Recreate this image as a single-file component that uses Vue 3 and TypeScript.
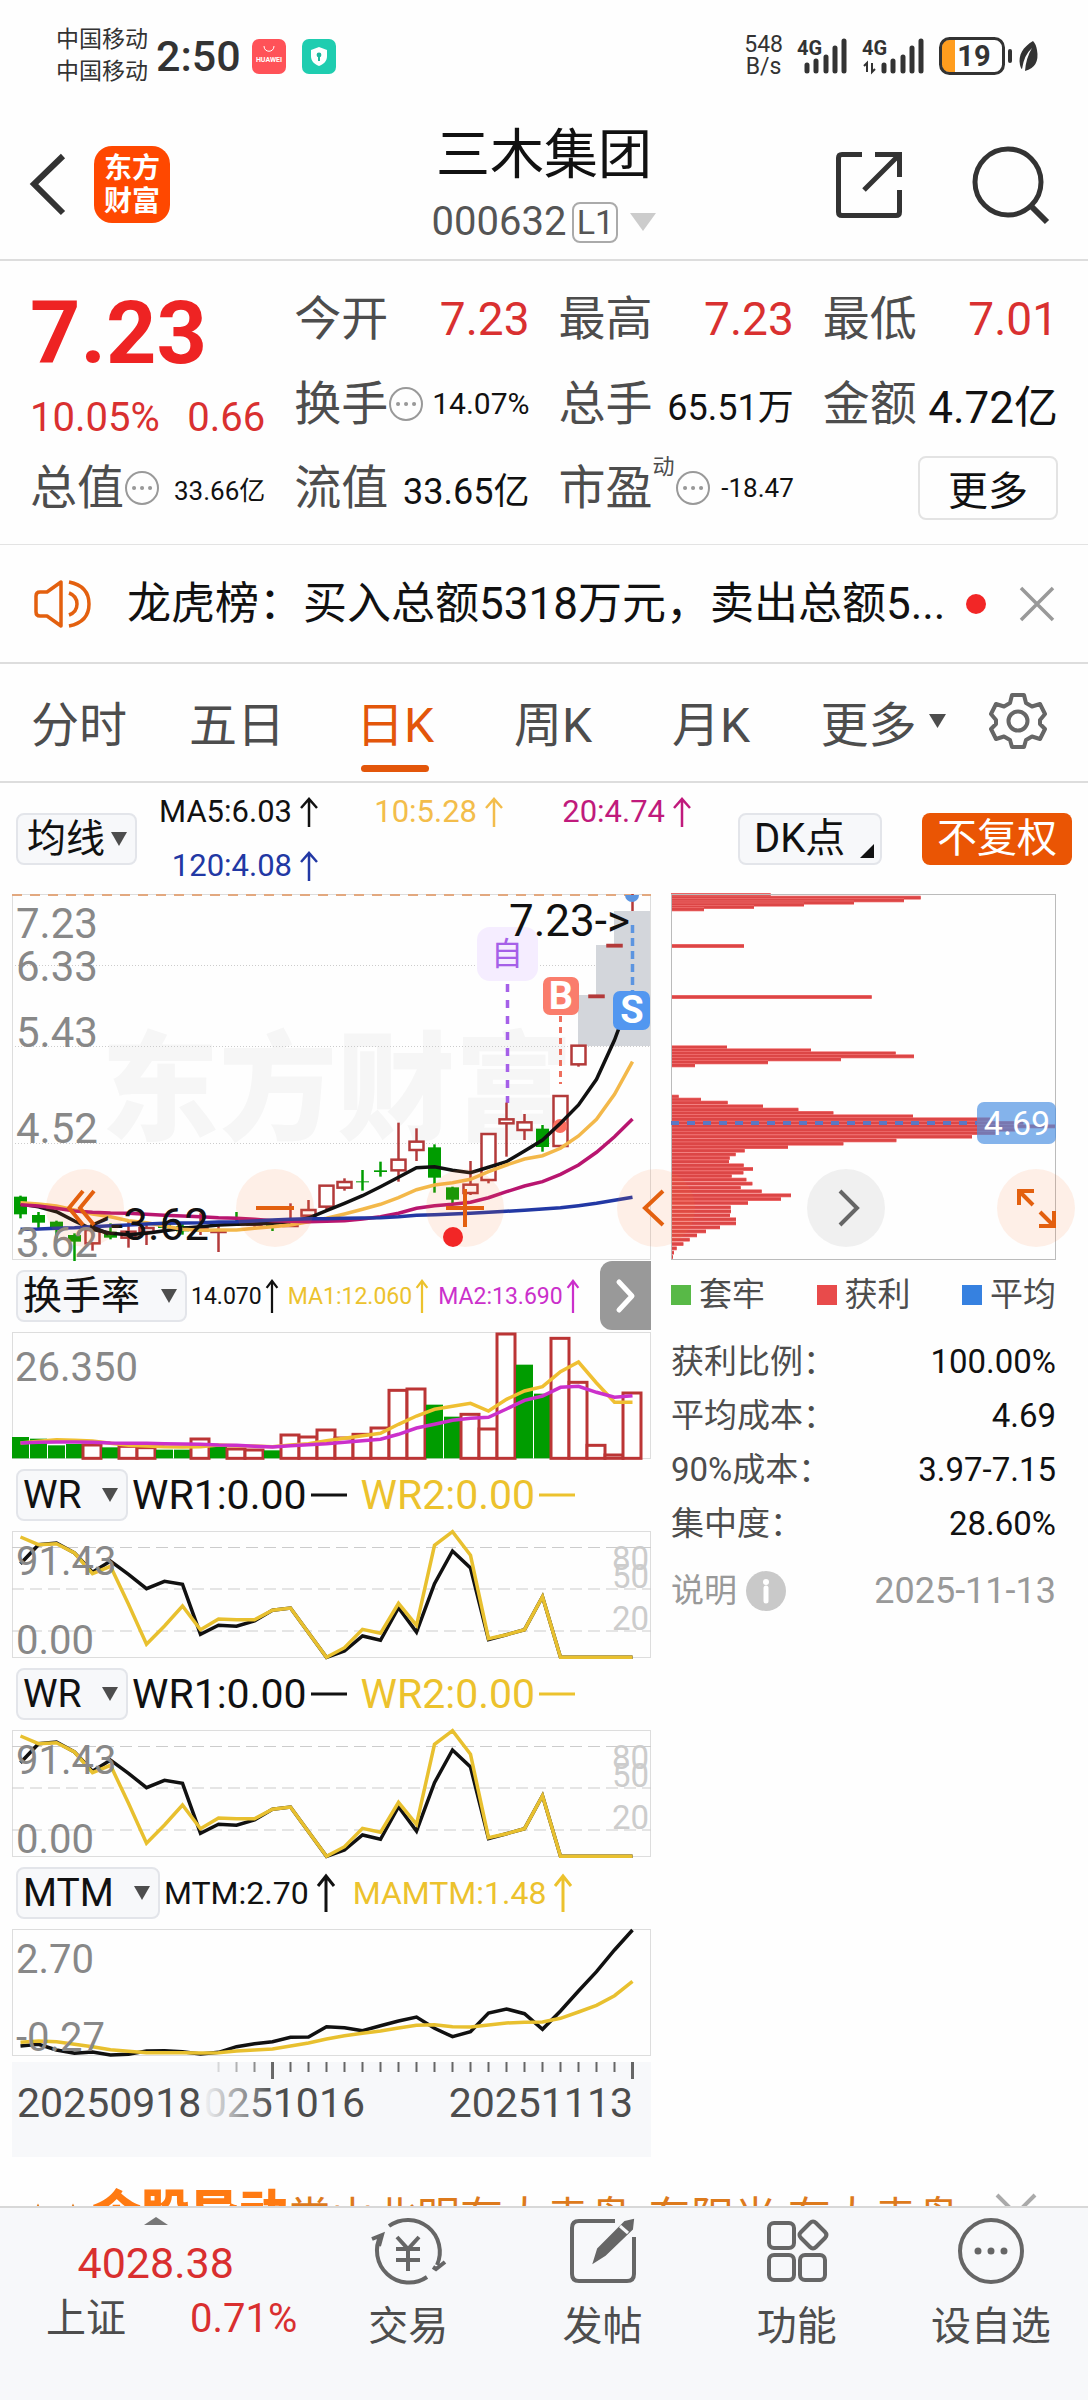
<script setup lang="ts">
import { ref } from 'vue'

type Trend = 'up' | 'flat'
interface Reading { text: string; color: string; trend: Trend }
/* top, bottom, high, low of a candle; samples are stored at 3x vertical resolution */
type Candle = [number, number, number, number, 'r' | 'g']

const SLOT = 18
const xAt = (i: number): number => 8.5 + i * SLOT
const line = (values: number[], origin: number, start = 0): string =>
  values.map((v, i) => `${xAt(i + start)},${((v - origin) / 3).toFixed(1)}`).join(' ')

const period = ref('日K')
const periods = ['分时', '五日', '日K', '周K', '月K']

const maReadings: Reading[] = [
  { text: 'MA5:6.03', color: '#111', trend: 'up' },
  { text: '10:5.28', color: '#f3bd4b', trend: 'up' },
  { text: '20:4.74', color: '#c01a7c', trend: 'up' },
  { text: '120:4.08', color: '#2238a4', trend: 'up' },
]
const turnoverReadings: Reading[] = [
  { text: '14.070', color: '#111', trend: 'up' },
  { text: 'MA1:12.060', color: '#ecc22d', trend: 'up' },
  { text: 'MA2:13.690', color: '#cb30cb', trend: 'up' },
]
const wrReadings: Reading[] = [
  { text: 'WR1:0.00', color: '#111', trend: 'flat' },
  { text: 'WR2:0.00', color: '#ecc22d', trend: 'flat' },
]
const mtmReadings: Reading[] = [
  { text: 'MTM:2.70', color: '#111', trend: 'up' },
  { text: 'MAMTM:1.48', color: '#ecc22d', trend: 'up' },
]

const candles: Candle[] = [
  [410, 463, 407, 475, 'g'], [465, 488, 456, 505, 'g'], [485, 510, 482, 535, 'g'], [525, 545, 520, 603, 'g'],
  [510, 550, 492, 572, 'r'], [515, 533, 490, 538, 'g'], [515, 533, 485, 563, 'r'], [504, 516, 488, 555, 'r'],
  [490, 504, 475, 512, 'g'], [498, 514, 490, 524, 'g'], [505, 512, 460, 525, 'r'], [514, 516, 498, 576, 'r'],
  [484, 488, 456, 498, 'g'], [490, 494, 484, 500, 'r'], [494, 498, 480, 513, 'g'], [494, 498, 430, 499, 'r'],
  [450, 467, 420, 475, 'r'], [377, 440, 377, 448, 'r'], [366, 383, 355, 392, 'r'], [364, 367, 330, 392, 'g'],
  [331, 336, 305, 350, 'g'], [299, 331, 188, 365, 'r'], [245, 270, 205, 303, 'r'], [262, 353, 253, 398, 'g'],
  [382, 419, 380, 430, 'g'], [374, 399, 303, 405, 'r'], [222, 360, 222, 370, 'r'], [178, 190, 128, 290, 'r'],
  [187, 210, 162, 240, 'r'], [206, 261, 195, 275, 'g'], [108, 258, 106, 260, 'r'], [-43, 13, -43, 20, 'r'],
  [-193, -189, -193, -189, 'r'], [-345, -341, -345, -341, 'r'],
]
const ma5 = [432, 440, 455, 483, 508, 520, 524, 520, 512, 505, 500, 495, 493, 492, 490, 485, 474, 452, 430, 407, 380, 352, 323, 320, 331, 338, 322, 305, 273, 240, 190, 135, 58, -60, -205]
const ma10 = [428, 432, 438, 450, 462, 470, 482, 488, 498, 508, 511, 510, 510, 505, 500, 495, 485, 475, 462, 448, 433, 413, 389, 375, 368, 358, 335, 315, 297, 287, 265, 228, 178, 103, 5]
const ma20 = [434, 438, 445, 453, 457, 459, 460, 463, 466, 468, 470, 473, 475, 478, 482, 484, 485, 484, 482, 477, 470, 460, 445, 437, 433, 427, 413, 395, 378, 365, 343, 315, 277, 230, 177]
const ma120 = [508, 507, 505, 503, 500, 497, 495, 492, 490, 489, 488, 486, 485, 483, 480, 478, 476, 476, 475, 474, 473, 470, 466, 464, 462, 460, 457, 454, 451, 447, 443, 437, 430, 421, 412]
const maLines = [
  { values: ma5, color: '#111' }, { values: ma10, color: '#f3b84a' },
  { values: ma20, color: '#b8156f' }, { values: ma120, color: '#2238a4' },
]

const volume: [number, 'r' | 'g'][] = [
  [349, 'g'], [354, 'g'], [374, 'g'], [370, 'g'], [373, 'r'], [380, 'g'], [377, 'r'], [381, 'r'], [387, 'g'], [387, 'g'],
  [355, 'r'], [377, 'g'], [385, 'r'], [388, 'r'], [389, 'g'], [343, 'r'], [349, 'r'], [328, 'r'], [352, 'r'], [341, 'r'],
  [322, 'r'], [209, 'r'], [205, 'r'], [252, 'g'], [288, 'g'], [281, 'r'], [325, 'r'], [40, 'r'], [132, 'g'], [219, 'g'],
  [53, 'r'], [185, 'r'], [374, 'r'], [403, 'r'], [217, 'r'],
]
const volMa1 = [368, 363, 358, 360, 362, 369, 375, 377, 379, 380, 379, 374, 376, 377, 379, 374, 370, 361, 354, 346, 339, 312, 287, 267, 258, 249, 272, 237, 212, 199, 154, 125, 188, 246, 246]
const volMa2 = [368, 366, 365, 365, 366, 368, 369, 369, 370, 371, 372, 374, 375, 378, 380, 376, 373, 370, 366, 361, 357, 342, 323, 312, 300, 294, 291, 266, 240, 227, 201, 198, 216, 231, 226]

const wr1 = [730, 673, 668, 698, 756, 722, 762, 805, 783, 792, 942, 915, 918, 902, 870, 863, 937, 1011, 992, 947, 960, 862, 935, 790, 692, 743, 958, 943, 928, 829, 1011, 1011, 1011, 1011, 1011]
const wr2 = [650, 673, 670, 698, 760, 738, 852, 972, 917, 857, 928, 896, 898, 898, 870, 863, 937, 1011, 982, 927, 939, 849, 915, 675, 634, 705, 955, 943, 928, 829, 1011, 1011, 1011, 1011, 1011]
const mtm = [558, 553, 570, 580, 576, 585, 583, 573, 572, 575, 582, 577, 560, 551, 545, 532, 531, 500, 503, 512, 497, 483, 471, 505, 530, 515, 459, 447, 461, 508, 453, 393, 335, 270, 210]
const mamtm = [547, 543, 545, 553, 560, 569, 574, 578, 578, 578, 579, 578, 573, 570, 567, 558, 549, 537, 527, 520, 513, 504, 496, 494, 500, 501, 495, 489, 487, 486, 475, 456, 436, 407, 364]

/* cost distribution: [row, extent] pairs at 3x resolution */
const chips: [number, number][] = [
  [48, 392], [56, 842], [64, 792], [71, 642], [77, 492], [84, 342], [91, 192], [201, 312], [354, 695],
  [505, 261], [514, 513], [523, 767], [532, 822], [541, 603], [550, 384], [559, 165],
  [653, 116], [662, 183], [671, 263], [682, 369], [692, 475], [702, 580], [712, 819], [721, 1050], [732, 1150],
  [742, 1247], [752, 1130], [762, 1070], [773, 996], [784, 769], [794, 610], [804, 444], [815, 314], [826, 287],
  [837, 269], [848, 267], [859, 311], [870, 339], [881, 310], [891, 275], [902, 319], [914, 337], [926, 302],
  [937, 365], [949, 453], [960, 423], [972, 324], [985, 272], [997, 273], [1009, 270], [1021, 288], [1033, 288],
  [1045, 240], [1057, 198], [1069, 171], [1082, 149], [1095, 130], [1108, 110], [1121, 102], [1134, 99],
]
const ticks = Array.from({ length: 24 }, (_, k) => k + 11)

const legend = [
  { name: '套牢', color: '#58b947' }, { name: '获利', color: '#e84b4b' }, { name: '平均', color: '#3681e0' },
]
const costs = [
  ['获利比例：', '100.00%'], ['平均成本：', '4.69'], ['90%成本：', '3.97-7.15'], ['集中度：', '28.60%'],
]
</script>

<template>
  <div class="app">
    <div class="status">
      <div class="carriers"><span>中国移动</span><span>中国移动</span></div>
      <span class="clock">2:50</span>
      <svg class="badge-app" viewBox="0 0 34 35"><rect width="34" height="35" rx="7" fill="#ff5258" /><path d="M12 7c0 7 10 7 10 0" fill="none" stroke="#fff" stroke-width="1" /><text x="17" y="23" font-size="7" fill="#fff" text-anchor="middle" font-weight="700">HUAWEI</text></svg>
      <svg class="badge-app" viewBox="0 0 34 35"><rect width="34" height="35" rx="7" fill="#1fcdb0" /><path d="M17 8l8 3v6c0 5-3 8-8 10-5-2-8-5-8-10v-6z" fill="#fff" /><circle cx="17" cy="16" r="2.4" fill="#1fb89e" /><path d="M17 16v6" stroke="#1fb89e" stroke-width="2" /></svg>
      <div class="net"><span>548</span><span>B/s</span></div>
      <svg class="signal" viewBox="0 0 51 36"><text x="0" y="17" font-size="20" font-weight="700" fill="#333">4G</text><path d="M10 27v6M19 23v10M29 19v14M38 10v23M47 3v30" stroke="#333" stroke-width="5" stroke-linecap="round" /></svg>
      <svg class="signal wide" viewBox="0 0 63 36"><text x="0" y="17" font-size="20" font-weight="700" fill="#333">4G</text><path d="M5 34V25l-3 3M10 25v9l3-3" fill="none" stroke="#333" stroke-width="2" /><path d="M22 27v6M31 23v10M41 19v14M50 10v23M59 3v30" stroke="#333" stroke-width="5" stroke-linecap="round" /></svg>
      <svg class="battery" viewBox="0 0 74 38"><path d="M10 3h6v32h-6q-7 0-7-7V10q0-7 7-7z" fill="#ff9d1e" /><rect x="1.5" y="1.5" width="63" height="35" rx="9" fill="none" stroke="#333" stroke-width="3" /><path d="M71 14v10" stroke="#333" stroke-width="4" stroke-linecap="round" /><text x="35" y="29" font-size="29" font-weight="700" text-anchor="middle" fill="#333">19</text></svg>
      <svg class="leaf" viewBox="0 0 22 32"><path d="M15 1C5 7 0 15 2 25q1 4 2 4Q6 15 14 8 8 18 7 31 22 27 19 10 18 4 15 1z" fill="#333" /></svg>
    </div>

    <header class="head">
      <div class="head-left">
        <button class="bare" aria-label="返回"><svg width="36" height="64" viewBox="0 0 36 64"><path d="M33 3L4 31 33 60" fill="none" stroke="#333" stroke-width="6" /></svg></button>
        <div class="logo"><span>东方</span><span>财富</span></div>
      </div>
      <div class="title">
        <h1>三木集团</h1>
        <div class="code"><span>000632</span><i>L1</i><svg width="26" height="18" viewBox="0 0 26 18"><path d="M0 0h26L13 18z" fill="#ccc" /></svg></div>
      </div>
      <div class="head-right">
        <button class="bare" aria-label="分享"><svg width="66" height="66" viewBox="0 0 66 66"><path d="M26 2.5H6Q2.5 2.5 2.5 6v54q0 3.5 3.5 3.5h54q3.5 0 3.5-3.5V38M39 2.5h24.5V25M63 3L28 38" fill="none" stroke="#333" stroke-width="5" /></svg></button>
        <button class="bare" aria-label="搜索"><svg width="78" height="78" viewBox="0 0 78 78"><circle cx="36" cy="36" r="33" fill="none" stroke="#333" stroke-width="5" /><path d="M59 60l16 16" stroke="#333" stroke-width="6" /></svg></button>
      </div>
    </header>

    <main>
      <section class="quote">
        <div class="price">
          <strong>7.23</strong>
          <p><span>10.05%</span><span>0.66</span></p>
        </div>
        <div class="cell"><span>今开</span><b class="up">7.23</b></div>
        <div class="cell"><span>最高</span><b class="up">7.23</b></div>
        <div class="cell"><span>最低</span><b class="up">7.01</b></div>
        <div class="cell"><span>换手<svg class="more-dot" viewBox="0 0 36 36"><circle cx="18" cy="18" r="16" fill="none" stroke="#999" stroke-width="2" /><path d="M10 18h.1M18 18h.1M26 18h.1" stroke="#999" stroke-width="4" stroke-linecap="round" /></svg></span><b class="s">14.07%</b></div>
        <div class="cell"><span>总手</span><b class="m">65.51万</b></div>
        <div class="cell"><span>金额</span><b class="l">4.72亿</b></div>
        <div class="cell"><span>总值<svg class="more-dot" viewBox="0 0 36 36"><circle cx="18" cy="18" r="16" fill="none" stroke="#999" stroke-width="2" /><path d="M10 18h.1M18 18h.1M26 18h.1" stroke="#999" stroke-width="4" stroke-linecap="round" /></svg></span><b class="xs">33.66亿</b></div>
        <div class="cell"><span>流值</span><b class="m">33.65亿</b></div>
        <div class="cell"><span>市盈<sup>动</sup><svg class="more-dot" viewBox="0 0 36 36"><circle cx="18" cy="18" r="16" fill="none" stroke="#999" stroke-width="2" /><path d="M10 18h.1M18 18h.1M26 18h.1" stroke="#999" stroke-width="4" stroke-linecap="round" /></svg></span><b class="xs">-18.47</b></div>
        <div class="cell end"><button class="more">更多</button></div>
      </section>

      <section class="notice">
        <svg width="58" height="50" viewBox="0 0 58 50"><path d="M27 3v44L13 37H6q-4 0-4-4V17q0-4 4-4h7z" fill="none" stroke="#e3600f" stroke-width="3.5" stroke-linejoin="round" /><path d="M35 14q8 3 8 11t-8 11M35 3q20 4 20 22T35 47" fill="none" stroke="#e3600f" stroke-width="3.5" /></svg>
        <p>龙虎榜：买入总额5318万元，卖出总额5...</p>
        <i class="dot"></i>
        <button class="bare" aria-label="关闭"><svg width="34" height="34" viewBox="0 0 34 34"><path d="M1 1l32 32M33 1L1 33" stroke="#999" stroke-width="3.5" /></svg></button>
      </section>

      <nav class="tabs">
        <button v-for="p in periods" :key="p" class="tab" :class="{ on: p === period }" @click="period = p">{{ p }}</button>
        <button class="tab wide">更多<svg width="17" height="14" viewBox="0 0 17 14"><path d="M0 0h17L8.5 14z" fill="#4d4d4d" /></svg></button>
        <button class="tab gear" aria-label="设置"><svg width="58" height="58" viewBox="0 0 58 58"><path d="M23 3h12l2 8 6 3.5 8-2.500 5 10-5 6v4l5 5-5 10-8-2.500-6 3.500-2 7H23l-2-7-6-3.500-8 2.500-5-10 5-5v-4l-5-6 5-10 8 2.500 6-3.500z" fill="none" stroke="#666" stroke-width="4" stroke-linejoin="round" /><circle cx="29" cy="29" r="9.5" fill="none" stroke="#666" stroke-width="4" /></svg></button>
      </nav>

      <div class="toolbar">
        <label class="pick tight"><select aria-label="主图指标"><option>均线</option></select><svg width="16" height="14" viewBox="0 0 16 14"><path d="M0 0h16L8 14z" fill="#4d4d4d" /></svg></label>
        <div class="ma">
          <span v-for="r in maReadings" :key="r.text" :style="{ color: r.color }">{{ r.text }}<svg class="arrow" viewBox="0 0 18 30"><path d="M9 30V2M1 11L9 2l8 9" fill="none" stroke="currentColor" stroke-width="2.5" /></svg></span>
        </div>
        <button class="dk">DK点<svg width="14" height="14" viewBox="0 0 14 14"><path d="M14 0v14H0z" fill="#111" /></svg></button>
        <button class="adjust">不复权</button>
      </div>

      <section class="board">
        <div class="left">
          <svg class="plot" viewBox="0 0 639 366">
            <text x="325" y="237" class="mark" text-anchor="middle">东方财富</text>
            <path d="M0 71.5h639M0 152.5h639M0 249.5h639" stroke="#ccc" stroke-dasharray="1 2" />
            <path d="M566 152V101h18V51h18V17h37v135z" fill="#d3d6db" />
            <rect x="0.5" y="0.5" width="638" height="365" fill="none" stroke="#ddd" />
            <path d="M0 1h639" stroke="#e2a87f" stroke-width="2" stroke-dasharray="10 8" />
            <g class="scale big"><text x="4" y="44">7.23</text><text x="4" y="87">6.33</text><text x="4" y="153">5.43</text><text x="4" y="249">4.52</text></g>
            <rect x="465" y="33" width="61" height="54" rx="13" fill="#f5edff" />
            <text x="495" y="71" font-size="32" fill="#a560e8" text-anchor="middle">自</text>
            <path d="M495.5 90v119" stroke="#a560e8" stroke-width="3.5" stroke-dasharray="8 8" />
            <path d="M548.5 122v68" stroke="#ee6f5e" stroke-width="3" stroke-dasharray="6 5" />
            <path d="M620.5 31v68" stroke="#5c95e0" stroke-width="3.5" stroke-dasharray="8 5" />
            <g v-for="(c, i) in candles" :key="i">
              <path :d="`M${xAt(i)} ${(c[2] + 498) / 3}V${(c[3] + 498) / 3}`" :stroke="c[4] === 'g' ? '#009c00' : '#b33a3a'" stroke-width="2.5" />
              <rect :x="xAt(i) - (c[4] === 'g' ? 6.5 : 7)" :y="(c[0] + 498) / 3" :width="c[4] === 'g' ? 13 : 14" :height="(c[1] - c[0]) / 3" :fill="c[4] === 'g' ? '#009c00' : '#fff'" :stroke="c[4] === 'g' ? 'none' : '#b33a3a'" stroke-width="2.5" />
            </g>
            <path d="M620.5 0v17" stroke="#b33a3a" stroke-width="2.5" />
            <path d="M613 1a7 7 0 0 0 14 0z" fill="#5c95e0" />
            <circle cx="548" cy="232" r="7" fill="#fb6f5f" />
            <polyline v-for="m in maLines" :key="m.color" :points="line(m.values, -498)" fill="none" :stroke="m.color" stroke-width="3.5" />
            <g class="scale big"><text x="4" y="363">3.62</text></g>
            <rect x="531" y="83" width="36" height="38" rx="7" fill="#fa7d6c" /><text x="549" y="115" class="tag">B</text>
            <rect x="601" y="97" width="37" height="39" rx="7" fill="#5297f0" /><text x="620" y="129" class="tag">S</text>
            <text x="618" y="42" class="note" text-anchor="end">7.23-&gt;</text>
            <text x="197" y="346" class="note" text-anchor="end">&lt;-3.62</text>
          </svg>

          <div class="row">
            <label class="pick"><select aria-label="副图指标一"><option>换手率</option></select><svg width="16" height="14" viewBox="0 0 16 14"><path d="M0 0h16L8 14z" fill="#4d4d4d" /></svg></label>
            <span v-for="r in turnoverReadings" :key="r.text" class="narrow" :style="{ color: r.color }">{{ r.text }}<svg class="arrow slim" viewBox="0 0 14 38"><path d="M7 38V2M1 10L7 2l6 8" fill="none" stroke="currentColor" stroke-width="2.5" /></svg></span>
            <button class="slide" aria-label="展开"><svg width="20" height="34" viewBox="0 0 20 34"><path d="M3 3l13 14L3 31" fill="none" stroke="#fff" stroke-width="5" stroke-linecap="round" stroke-linejoin="round" /></svg></button>
          </div>
          <svg class="plot" viewBox="0 0 639 127">
            <rect x="0.5" y="0.5" width="638" height="126" fill="none" stroke="#ddd" />
            <rect v-for="(v, i) in volume" :key="i" :x="v[1] === 'g' ? i * SLOT : i * SLOT - 1" :y="(v[0] - 34) / 3" :width="v[1] === 'g' ? 17 : 18" :height="(413 - v[0]) / 3" :fill="v[1] === 'g' ? '#009c00' : '#fff'" :stroke="v[1] === 'g' ? 'none' : '#bb3535'" stroke-width="3" />
            <polyline :points="line(volMa1, 35)" fill="none" stroke="#efbf32" stroke-width="3.5" />
            <polyline :points="line(volMa2, 35)" fill="none" stroke="#cb30cb" stroke-width="3.5" />
            <text x="3" y="49" class="scale">26.350</text>
          </svg>

          <template v-for="n in 2" :key="n">
            <div class="row">
              <label class="pick"><select :aria-label="`WR 指标 ${n}`"><option>WR</option></select><svg width="16" height="14" viewBox="0 0 16 14"><path d="M0 0h16L8 14z" fill="#4d4d4d" /></svg></label>
              <span v-for="r in wrReadings" :key="r.text" class="normal" :style="{ color: r.color }">{{ r.text }}<svg class="dash" viewBox="0 0 36 4"><path d="M0 2h36" stroke="currentColor" stroke-width="3" /></svg></span>
            </div>
            <svg class="plot" viewBox="0 0 639 127">
              <rect x="0.5" y="0.5" width="638" height="126" fill="none" stroke="#ddd" />
              <path d="M0 16.5h639M0 58h639M0 100h639" stroke="#ccc" stroke-width="1" stroke-dasharray="12 6" />
              <polyline :points="line(wr1, 632)" fill="none" stroke="#111" stroke-width="3.5" />
              <polyline :points="line(wr2, 632)" fill="none" stroke="#e8c02f" stroke-width="3.5" />
              <text x="4" y="44" class="scale">91.43</text><text x="4" y="123" class="scale">0.00</text>
              <g class="axis"><text x="637" y="39">80</text><text x="637" y="57">50</text><text x="637" y="99">20</text></g>
            </svg>
          </template>

          <div class="row">
            <label class="pick"><select aria-label="副图指标四"><option>MTM</option></select><svg width="16" height="14" viewBox="0 0 16 14"><path d="M0 0h16L8 14z" fill="#4d4d4d" /></svg></label>
            <span v-for="r in mtmReadings" :key="r.text" class="semi" :style="{ color: r.color }">{{ r.text }}<svg class="arrow" viewBox="0 0 18 38"><path d="M9 38V2M1 12L9 2l8 10" fill="none" stroke="currentColor" stroke-width="3" /></svg></span>
          </div>
          <svg class="plot" viewBox="0 0 639 127">
            <rect x="0.5" y="0.5" width="638" height="126" fill="none" stroke="#ddd" />
            <polyline :points="line(mtm, 207)" fill="none" stroke="#111" stroke-width="3.5" />
            <polyline :points="line(mamtm, 207)" fill="none" stroke="#e8c02f" stroke-width="3.5" />
            <text x="4" y="44" class="scale">2.70</text><text x="4" y="122" class="scale">-0.27</text>
          </svg>
          <svg class="plot dates" viewBox="0 0 639 95">
            <defs><linearGradient id="fade"><stop offset="0" stop-color="#f7f8fa" /><stop offset="0.15" stop-color="#f7f8fa" stop-opacity="0.85" /><stop offset="1" stop-color="#f7f8fa" stop-opacity="0" /></linearGradient></defs>
            <path v-for="t in ticks" :key="t" :d="`M${xAt(t)} 0V${(t - 14) % 20 ? 10 : 17}`" stroke="#666" :stroke-width="(t - 14) % 20 ? 2 : 3" />
            <text x="353" y="55" text-anchor="end">20251016</text>
            <rect x="0" y="0" width="190" height="95" fill="#f7f8fa" />
            <rect x="190" y="0" width="72" height="95" fill="url(#fade)" />
            <text x="5" y="55">20250918</text>
            <text x="621" y="55" text-anchor="end">20251113</text>
          </svg>
        </div>

        <div class="right">
          <svg class="plot" viewBox="0 0 385 366">
            <g v-for="c in chips" :key="c[0]">
              <rect x="0" :y="(c[0] - 45) / 3 - 2" :width="(c[1] - 93) / 3" height="4" fill="#f47a7a" />
              <rect x="0" :y="(c[0] - 45) / 3 - 1.4" :width="(c[1] - 93) / 3" height="2.8" fill="#dc4646" />
            </g>
            <rect x="0.5" y="0.5" width="384" height="365" fill="none" stroke="#bbb" />
            <path d="M0 229h306" stroke="#5c78c4" stroke-width="4" stroke-dasharray="8 8" />
            <rect x="306" y="208" width="79" height="42" rx="7" fill="#4a8fe2" fill-opacity="0.68" />
            <text x="346" y="241" font-size="34" fill="#fff" text-anchor="middle">4.69</text>
          </svg>
          <ul class="legend"><li v-for="l in legend" :key="l.name"><i :style="{ background: l.color }"></i>{{ l.name }}</li></ul>
          <dl class="costs"><div v-for="c in costs" :key="c[0]"><dt>{{ c[0] }}</dt><dd>{{ c[1] }}</dd></div></dl>
          <div class="explain"><span>说明</span><svg width="40" height="40" viewBox="0 0 40 40"><circle cx="20" cy="20" r="20" fill="#c9c9c9" /><path d="M20 17v13" stroke="#fff" stroke-width="5" stroke-linecap="round" /><circle cx="20" cy="11" r="3" fill="#fff" /></svg><time>2025-11-13</time></div>
        </div>

        <div class="controls">
          <button aria-label="快速左移"><svg viewBox="0 0 78 78"><path d="M37 22L23 39l14 17M48 22L34 39l14 17" /></svg></button>
          <button aria-label="缩小"><svg viewBox="0 0 78 78"><path d="M20 39h38" /></svg></button>
          <button aria-label="放大"><svg viewBox="0 0 78 78"><path d="M20 39h38M39 20v38" /></svg></button>
          <button aria-label="左移"><svg viewBox="0 0 78 78"><path d="M46 22L28 39l18 17" /></svg></button>
          <button class="gray" aria-label="右移"><svg viewBox="0 0 78 78"><path d="M33 22l17 17-17 17" /></svg></button>
          <button aria-label="全屏"><svg viewBox="0 0 78 78"><path d="M22 36V22h15M22 22l14 14M57 42v15H42M57 57L43 43" /></svg></button>
          <i class="record"></i>
        </div>
      </section>

      <section class="ticker">
        <svg width="52" height="40" viewBox="0 0 52 40"><path d="M2 16L8 4l6 12M37 16l6-12 6 12v22H2V16" fill="none" stroke="#e07b1d" stroke-width="4" /></svg>
        <em>个股异动</em>
        <p>常山北明有大卖盘</p>
        <p class="next">东阳光 有大卖盘</p>
        <button class="bare" aria-label="关闭"><svg width="40" height="40" viewBox="0 0 40 40"><path d="M1 1l38 38M39 1L1 39" stroke="#aaa" stroke-width="4" /></svg></button>
      </section>
    </main>

    <footer class="dock">
      <div class="index">
        <svg width="24" height="8" viewBox="0 0 24 8"><path d="M12 0l12 8H0z" fill="#777" /></svg>
        <strong>4028.38</strong>
        <p><span>上证</span><b>0.71%</b></p>
      </div>
      <button class="item"><svg viewBox="0 0 76 68"><path d="M19 9A32 32 0 0 1 67 48M57 60A32 32 0 0 1 11 18M2 22l10-4-3 11M63 50l3 2 9-7" /><path d="M27 20l11 12 11-12M38 32v22M26 32h24M26 43h24" /></svg>交易</button>
      <button class="item"><svg viewBox="0 0 76 68"><path d="M50 4H14q-7 0-7 7v46q0 7 7 7h48q7 0 7-7V20" /><path d="M29 45l4-13L60 5l8-2-1 9-27 26z" class="solid" /><path d="M55 9l8 7" class="cut" /></svg>发帖</button>
      <button class="item"><svg viewBox="0 0 76 68"><rect x="10" y="6" width="25" height="25" rx="5" /><rect x="10" y="38" width="25" height="25" rx="5" /><rect x="41" y="38" width="25" height="25" rx="5" /><path d="M51 6q3-3 6 0l9 9q3 3 0 6l-9 9q-3 3-6 0l-9-9q-3-3 0-6z" /></svg>功能</button>
      <button class="item"><svg viewBox="0 0 76 68"><circle cx="38" cy="34" r="31" /><g class="solid"><circle cx="25" cy="34" r="1.5" /><circle cx="38" cy="34" r="1.5" /><circle cx="51" cy="34" r="1.5" /></g></svg>设自选</button>
    </footer>
  </div>
</template>

<style>
body { margin: 0; background: #fff; }
</style>

<style scoped>
* { box-sizing: border-box; margin: 0; padding: 0; }
.app, .app button, .app select { font-family: Roboto, "Noto Sans CJK SC", sans-serif; }
.app { display: flex; flex-direction: column; height: 100vh; overflow: hidden; background: #fefefe; color: #111; }
.app svg { display: block; flex: none; overflow: visible; }
button { border: 0; background: none; color: inherit; white-space: nowrap; }
i, em { font-style: normal; }
ul { list-style: none; }
main { flex: 1; min-height: 0; overflow-x: hidden; overflow-y: auto; scrollbar-width: none; }

.status { display: flex; align-items: center; flex: none; height: 100px; padding: 12px 48px 0 56px; color: #333; }
.carriers { display: flex; flex-direction: column; font-size: 23px; line-height: 32px; margin-right: 8px; }
.clock { font-size: 43px; font-weight: 500; line-height: 48px; margin-right: 11px; }
.badge-app { width: 34px; height: 35px; margin-right: 16px; }
.net { display: flex; flex-direction: column; align-items: center; margin-left: auto; margin-right: 14px; font-size: 23px; line-height: 22px; }
.signal { width: 51px; height: 36px; margin-right: 14px; }
.signal.wide { width: 63px; }
.battery { width: 74px; height: 38px; margin-right: 5px; }
.leaf { width: 22px; height: 32px; }

.head { display: grid; grid-template-columns: 1fr auto 1fr; flex: none; height: 161px; padding: 0 30px; border-bottom: 2px solid #ddd; }
.head-left, .head-right { display: flex; align-items: center; margin-top: 10px; }
.head-left { gap: 28px; }
.head-right { justify-content: flex-end; gap: 70px; margin-right: 8px; }
.logo { display: flex; flex-direction: column; align-items: center; justify-content: center; width: 76px; height: 77px; border-radius: 18px; background: #ff4800; color: #fff; font-size: 28px; font-weight: 700; line-height: 33px; }
.title { display: flex; flex-direction: column; align-items: center; gap: 14px; padding-top: 26px; }
.title h1 { font-size: 54px; font-weight: 400; line-height: 60px; }
.code { display: flex; align-items: center; color: #555; font-size: 40px; line-height: 44px; }
.code i { display: flex; align-items: center; justify-content: center; width: 46px; height: 41px; margin: 0 12px 0 6px; border: 2px solid #aaa; border-radius: 8px; font-size: 34px; }

.quote { display: grid; grid-template-columns: repeat(4, 1fr); grid-template-rows: 85px 85px 84px; column-gap: 29px; padding: 15px 30px 14px; border-bottom: 1px solid #e3e3e3; }
.price { grid-row: span 2; padding-top: 7px; color: #ee2323; }
.price strong { display: block; font-size: 88px; line-height: 100px; }
.price p { display: flex; justify-content: space-between; color: #d93030; font-size: 40px; line-height: 70px; }
.cell { display: flex; align-items: center; justify-content: space-between; white-space: nowrap; }
.cell > span { display: flex; align-items: center; color: #4d4d4d; font-size: 47px; line-height: 84px; }
.cell sup { align-self: flex-start; font-size: 22px; line-height: 42px; }
.cell b { font-weight: 400; font-size: 46px; }
.cell b.up { color: #d93030; }
.cell b.l { font-size: 44px; }
.cell b.m { font-size: 36px; }
.cell b.s { font-size: 30px; }
.cell b.xs { font-size: 26px; }
.cell.end { justify-content: flex-end; }
.more-dot { width: 36px; height: 36px; }
.more { width: 140px; height: 64px; border: 2px solid #e3e3e3; border-radius: 8px; font-size: 40px; }

.notice { display: flex; align-items: center; height: 119px; padding: 0 34px; border-bottom: 2px solid #ddd; }
.notice p { flex: 1; min-width: 0; margin-left: 35px; overflow: hidden; white-space: nowrap; font-size: 44px; line-height: 60px; }
.dot { width: 20px; height: 20px; margin-right: 34px; border-radius: 50%; background: #f22626; }

.tabs { display: flex; height: 119px; padding-right: 28px; border-bottom: 2px solid #ddd; }
.tab { position: relative; display: flex; align-items: center; justify-content: center; flex: 158; padding-bottom: 4px; color: #4d4d4d; font-size: 48px; }
.tab.on { color: #e3560a; }
.tab.on::after { content: ""; position: absolute; bottom: 9px; width: 68px; height: 7px; border-radius: 4px; background: #e3560a; }
.tab.wide { flex: 186; gap: 12px; }
.tab.gear { flex: 84; }

.toolbar { display: flex; align-items: center; height: 111px; padding: 0 16px; }
.pick { position: relative; display: block; }
.pick select { display: block; height: 52px; padding: 0 44px 0 5px; border: 2px solid #e3e5ea; border-radius: 8px; background: #f7f8fa; color: #111; font-size: 39px; line-height: 48px; appearance: none; }
.pick svg { position: absolute; right: 10px; top: 19px; pointer-events: none; }
.pick.tight select { padding: 0 29px 0 9px; }
.ma { display: grid; grid-template-columns: 181px 185px 188px; font-size: 31px; line-height: 54px; }
.ma span { display: flex; align-items: center; justify-content: flex-end; gap: 8px; }
.arrow { width: 18px; height: 30px; }
.dk, .adjust { height: 52px; border-radius: 8px; font-size: 40px; line-height: 48px; }
.dk { display: flex; align-items: center; justify-content: space-between; width: 144px; margin-left: auto; padding: 0 6px 0 14px; border: 2px solid #e3e5ea; background: #f7f8fa; }
.dk svg { align-self: flex-end; margin-bottom: 5px; }
.adjust { width: 150px; margin-left: 40px; background: #ea5504; color: #fff; }

.board { position: relative; display: flex; align-items: flex-start; gap: 20px; padding: 0 32px 0 12px; }
.left { flex: 639; min-width: 0; }
.right { flex: 385; min-width: 0; }
.plot { width: 100%; height: auto; }
.scale { fill: #888; font-size: 40px; }
.big { font-size: 42px; }
.mark { fill: #f6f6f6; font-size: 118px; font-weight: 900; }
.note { fill: #111; font-size: 44px; }
.tag { fill: #fff; font-size: 38px; font-weight: 700; text-anchor: middle; }
.axis { fill: #ccc; font-size: 33px; text-anchor: end; }
.dates { margin-top: 6px; background: #f7f8fa; fill: #4d4d4d; font-size: 41px; }
.row { position: relative; display: flex; align-items: center; height: 72px; padding-left: 4px; white-space: nowrap; }
.row > span { display: flex; align-items: center; }
.narrow { margin-left: 4px; font-size: 23px; gap: 3px; }
.narrow + .narrow { margin-left: 9px; }
.arrow.slim { width: 14px; height: 34px; }
.semi { margin-left: 4px; font-size: 32px; gap: 8px; }
.semi .arrow { height: 38px; }
.semi + .semi { margin-left: 18px; }
.normal { margin-left: 4px; font-size: 41px; gap: 4px; }
.normal + .normal { margin-left: 14px; }
.dash { width: 36px; height: 4px; }
.slide { position: absolute; right: 0; top: 1px; display: flex; align-items: center; justify-content: center; width: 51px; height: 69px; border-radius: 12px 0 0 12px; background: #999; }

.legend { display: flex; align-items: flex-start; justify-content: space-between; height: 75px; padding-top: 10px; color: #4d4d4d; font-size: 33px; line-height: 50px; }
.legend li { display: flex; align-items: center; gap: 8px; }
.legend i { width: 20px; height: 20px; }
.costs { font-size: 33px; line-height: 54px; }
.costs div { display: flex; justify-content: space-between; }
.costs dt { color: #4d4d4d; white-space: nowrap; }
.explain { display: flex; align-items: center; gap: 9px; margin-top: 13px; color: #999; font-size: 33px; line-height: 54px; }
.explain time { margin-left: auto; font-size: 36px; }

.controls { position: absolute; left: 46px; right: 13px; top: 275px; display: flex; justify-content: space-between; }
.controls button { width: 78px; height: 78px; border-radius: 50%; background: rgba(255, 120, 50, 0.11); }
.controls svg { fill: none; stroke: #e3600f; stroke-width: 4; }
.controls .gray { background: rgba(60, 60, 60, 0.07); }
.controls .gray svg { stroke: #666; }
.record { position: absolute; left: 397px; top: 58px; width: 20px; height: 20px; border-radius: 50%; background: #f22626; }

.ticker { display: flex; align-items: center; height: 66px; margin-top: 24px; padding: 0 52px 0 30px; color: #dd7a1c; font-size: 43px; white-space: nowrap; }
.ticker > svg { margin-top: 20px; }
.ticker em { margin-left: 10px; color: #ff7a12; font-size: 49px; font-weight: 900; line-height: 60px; }
.ticker .next { margin-left: 16px; }
.ticker button { margin-left: auto; }

.dock { position: relative; display: flex; flex: none; height: 194px; border-top: 2px solid #d8d8d8; background: #f7f8fa; }
.index { display: flex; flex-direction: column; align-items: center; flex: 311; padding-top: 9px; color: #d92f2f; }
.index strong { margin-top: 13px; font-size: 43px; font-weight: 400; line-height: 50px; }
.index p { display: flex; justify-content: center; gap: 64px; margin: 5px 0 0 32px; font-size: 40px; line-height: 52px; }
.index span { color: #4d4d4d; }
.index b { font-weight: 400; }
.item { display: flex; flex-direction: column; align-items: center; gap: 17px; flex: 194; padding-top: 9px; color: #4d4d4d; font-size: 40px; line-height: 50px; }
.item svg { width: 76px; height: 68px; fill: none; stroke: #666; stroke-width: 4; }
.item .solid { fill: #666; stroke-width: 2; }
.item g.solid { stroke-width: 4; }
.item .cut { stroke: #f7f8fa; stroke-width: 3; }
</style>
